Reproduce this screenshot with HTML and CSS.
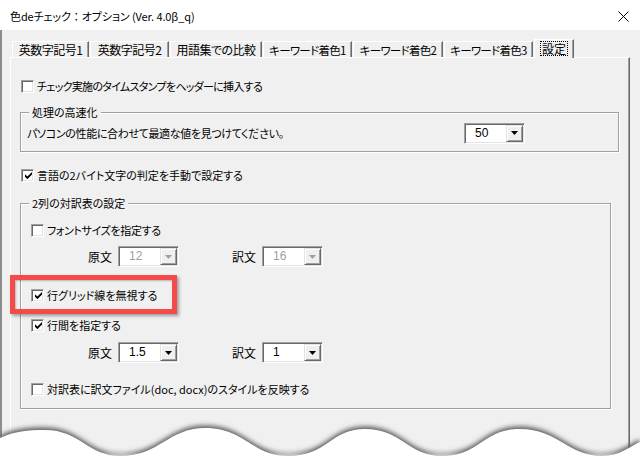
FILE: index.html
```html
<!DOCTYPE html>
<html lang="ja">
<head>
<meta charset="utf-8">
<title>色deチェック：オプション</title>
<link rel="stylesheet" href="styles.css">
</head>
<body>
<div class="window">
  <div class="titlebar">
    <span class="title">色deチェック<span class="colon">：</span>オプション (Ver. 4.0β_q)</span>
    <svg class="close" width="11" height="11" viewBox="0 0 11 11"><path d="M0.5 0.5L10.5 10.5M10.5 0.5L0.5 10.5" stroke="#000" stroke-width="1" fill="none"/></svg>
  </div>
  <div class="client">
    <div class="tabs">
      <div class="tab t1">英数字記号1</div>
      <div class="tab t2">英数字記号2</div>
      <div class="tab t3">用語集での比較</div>
      <div class="tab t4 kana">キーワード着色1</div>
      <div class="tab t5 kana">キーワード着色2</div>
      <div class="tab t6 kana">キーワード着色3</div>
      <div class="tab sel"><span class="focus">設定</span></div>
    </div>
    <div class="panel">
      <div class="chk"><span class="cb"></span><span class="tight">チェック実施のタイムスタンプをヘッダーに挿入する</span></div>

      <div class="group g1">
        <div class="legend">処理の高速化</div>
        <div class="g1-row">
          <span class="semi">パソコンの性能に合わせて最適な値を見つけてください。</span>
          <div class="combo speed"><span class="val">50</span><span class="btn"><svg width="7" height="4" viewBox="0 0 7 4"><path d="M0 0H7L3.5 4Z" fill="#000"/></svg></span></div>
        </div>
      </div>

      <div class="chk r3"><span class="cb on"><svg width="7" height="7" viewBox="0 0 7 7"><path d="M0 2.2L2.4 4.6L7 0V2.6L2.4 7.2L0 4.8Z" fill="#000"/></svg></span><span>言語の2バイト文字の判定を手動で設定する</span></div>

      <div class="group g2">
        <div class="legend">2列の対訳表の設定</div>
        <div class="chk in first"><span class="cb"></span><span class="semi">フォントサイズを指定する</span></div>
        <div class="pair p1">
          <span class="lbl">原文</span>
          <div class="combo off"><span class="val">12</span><span class="btn"><svg width="7" height="4" viewBox="0 0 7 4"><path d="M0 0H7L3.5 4Z" fill="#a0a0a0"/></svg></span></div>
          <span class="lbl second">訳文</span>
          <div class="combo off"><span class="val">16</span><span class="btn"><svg width="7" height="4" viewBox="0 0 7 4"><path d="M0 0H7L3.5 4Z" fill="#a0a0a0"/></svg></span></div>
        </div>
        <div class="chk in mark"><span class="cb on"><svg width="7" height="7" viewBox="0 0 7 7"><path d="M0 2.2L2.4 4.6L7 0V2.6L2.4 7.2L0 4.8Z" fill="#000"/></svg></span><span>行グリッド線を無視する</span></div>
        <div class="chk in r5"><span class="cb on"><svg width="7" height="7" viewBox="0 0 7 7"><path d="M0 2.2L2.4 4.6L7 0V2.6L2.4 7.2L0 4.8Z" fill="#000"/></svg></span><span>行間を指定する</span></div>
        <div class="pair p2">
          <span class="lbl">原文</span>
          <div class="combo"><span class="val">1.5</span><span class="btn"><svg width="7" height="4" viewBox="0 0 7 4"><path d="M0 0H7L3.5 4Z" fill="#000"/></svg></span></div>
          <span class="lbl second">訳文</span>
          <div class="combo"><span class="val">1</span><span class="btn"><svg width="7" height="4" viewBox="0 0 7 4"><path d="M0 0H7L3.5 4Z" fill="#000"/></svg></span></div>
        </div>
        <div class="chk in r6"><span class="cb"></span><span>対訳表に訳文ファイル(doc, docx)のスタイルを反映する</span></div>
      </div>
    </div>
  </div>
  <svg class="wave" width="640" height="44" viewBox="0 0 640 44">
    <defs>
      <filter id="sh" x="-5%" y="-60%" width="110%" height="220%"><feGaussianBlur stdDeviation="2.8"/></filter>
    </defs>
    <path transform="translate(0,-2.5)" filter="url(#sh)" fill="#5a5a5a" d="M0 24 C15 17 27 16 45 16 C80 16 88 42 120 42 C160 42 168 14 205 14 C245 14 252 42 288 42 C328 42 330 15 365 15 C402 15 408 42 442 42 C480 42 482 15 520 15 C558 15 568 42 602 42 C620 42 630 32 640 28 V44 H0 Z"/>
    <path fill="#fff" d="M0 24 C15 17 27 16 45 16 C80 16 88 42 120 42 C160 42 168 14 205 14 C245 14 252 42 288 42 C328 42 330 15 365 15 C402 15 408 42 442 42 C480 42 482 15 520 15 C558 15 568 42 602 42 C620 42 630 32 640 28 V44 H0 Z"/>
  </svg>
</div>
</body>
</html>
```
FILE: styles.css
```css
*, *::before, *::after { box-sizing: border-box; }
html, body { margin: 0; padding: 0; }
body {
  width: 640px;
  height: 458px;
  overflow: hidden;
  background: #f0f0f0;
  font-family: "Noto Sans CJK JP", "Liberation Sans", sans-serif;
  font-size: 11px;
  color: #000;
  font-feature-settings: "palt";
}
.window { position: relative; width: 640px; height: 458px; overflow: hidden; }

.titlebar {
  height: 30px;
  background: #fff;
  display: flex;
  align-items: center;
  padding: 0 11px 0 10px;
}
.title { flex: 1; font-size: 11px; line-height: 16px; margin-top: 2px; letter-spacing: -0.1px; white-space: nowrap; }
.colon { font-feature-settings: normal; }
.close { flex: none; margin-top: 2px; }

.client {
  height: 428px;
  border-left: 2px solid #8c8c8c;
  padding-left: 8px;
}

.tabs {
  display: flex;
  align-items: flex-end;
  height: 27px;
  padding-left: 2px;
  position: relative;
  z-index: 1;
}
.tab {
  height: 16px;
  display: flex;
  align-items: center;
  justify-content: center;
  font-size: 12px;
  letter-spacing: -0.5px;
  line-height: 14px;
  white-space: nowrap;
  border-left: 1px solid #fff;
  border-top: 1px solid #fff;
  border-right: 1px solid #696969;
  box-shadow: inset -1px 0 0 #a0a0a0;
  border-top-left-radius: 1px;
  margin-right: 1px;
}
.tab.kana { font-size: 11.5px; letter-spacing: -0.7px; }
.t1 { width: 77px; }
.t2 { width: 79px; }
.t3 { width: 92px; }
.t4 { width: 89px; }
.t5 { width: 90px; }
.t6 { width: 89px; }
.tab.sel {
  width: 40px;
  height: 19px;
  margin-bottom: -1px;
  background: #f0f0f0;
  padding-bottom: 2px;
}
.focus { border: 1px dotted #000; padding: 0 1px; line-height: 13px; letter-spacing: 0; }

.panel {
  width: 620px;
  height: 420px;
  border-top: 1px solid #fff;
  border-left: 1px solid #fff;
  border-right: 1px solid #696969;
  box-shadow: inset -1px 0 0 #a0a0a0;
  padding: 20px 0 0 9px;
}

.tight { letter-spacing: -0.7px; }
.semi { letter-spacing: -0.35px; }

.chk {
  display: flex;
  align-items: center;
  height: 16px;
  line-height: 16px;
  padding-left: 1px;
  white-space: nowrap;
}
.cb {
  flex: none;
  width: 13px;
  height: 13px;
  margin-right: 3px;
  background: #fff;
  border-top: 1px solid #a0a0a0;
  border-left: 1px solid #a0a0a0;
  border-right: 1px solid #fff;
  border-bottom: 1px solid #fff;
  box-shadow: inset 1px 1px 0 #696969, inset -1px -1px 0 #e3e3e3;
  display: flex;
  align-items: center;
  justify-content: center;
}
.cb svg { display: block; margin: 1px 0 0 1px; }

.group {
  border: 1px solid #a0a0a0;
  box-shadow: 1px 1px 0 #fff, inset 1px 1px 0 #fff;
  display: flex;
  flex-direction: column;
}
.legend {
  align-self: flex-start;
  margin: -9px 0 0 8px;
  padding: 0 3px;
  height: 16px;
  line-height: 16px;
  background: #f0f0f0;
  white-space: nowrap;
}
.g1 { width: 599px; height: 40px; margin-top: 18px; }
.g1-row {
  display: flex;
  align-items: center;
  height: 24px;
  margin-top: 1px;
  padding-left: 6px;
  white-space: nowrap;
}
.g1-row .combo { margin-left: auto; margin-right: 93px; }
.speed { height: 22px; }

.r3 { margin-top: 15px; }

.g2 { width: 591px; height: 206px; margin-top: 20px; }
.chk.in { padding-left: 10px; }
.chk.first { margin-top: 11px; }
.mark { margin-top: 20px; position: relative; }
.mark::after {
  content: "";
  position: absolute;
  left: -11px;
  top: -12px;
  width: 167px;
  height: 39px;
  border: 5px solid #f44a4a;
  box-shadow: 2px 2px 3px rgba(0,0,0,0.35), inset 1px 1px 2px rgba(0,0,0,0.25);
}
.r5 { margin-top: 14px; }
.r6 { margin-top: 18px; }

.pair {
  display: flex;
  align-items: center;
  height: 21px;
  padding-left: 67px;
}
.p1 { margin-top: 8px; }
.p2 { margin-top: 9px; }
.lbl { width: 30px; line-height: 16px; font-size: 12px; }
.lbl.second { margin-left: 53px; }

.combo {
  flex: none;
  width: 61px;
  height: 21px;
  display: flex;
  background: #fff;
  border-top: 1px solid #a0a0a0;
  border-left: 1px solid #a0a0a0;
  border-right: 1px solid #fff;
  border-bottom: 1px solid #fff;
  box-shadow: inset 1px 1px 0 #696969, inset -1px -1px 0 #e3e3e3;
  padding: 1px;
}
.combo .val {
  flex: 1;
  padding-left: 9px;
  line-height: 17px;
  font-size: 12px;
  font-family: "Liberation Sans", sans-serif;
}
.combo.off .val { color: #a0a0a0; }
.combo .btn {
  flex: none;
  width: 17px;
  background: #f0f0f0;
  border-top: 1px solid #e3e3e3;
  border-left: 1px solid #e3e3e3;
  border-right: 1px solid #696969;
  border-bottom: 1px solid #696969;
  box-shadow: inset 1px 1px 0 #fff, inset -1px -1px 0 #a0a0a0;
  display: flex;
  align-items: center;
  justify-content: center;
}
.combo .btn svg { display: block; }

.wave { position: absolute; left: 0; bottom: 0; display: block; }
```
